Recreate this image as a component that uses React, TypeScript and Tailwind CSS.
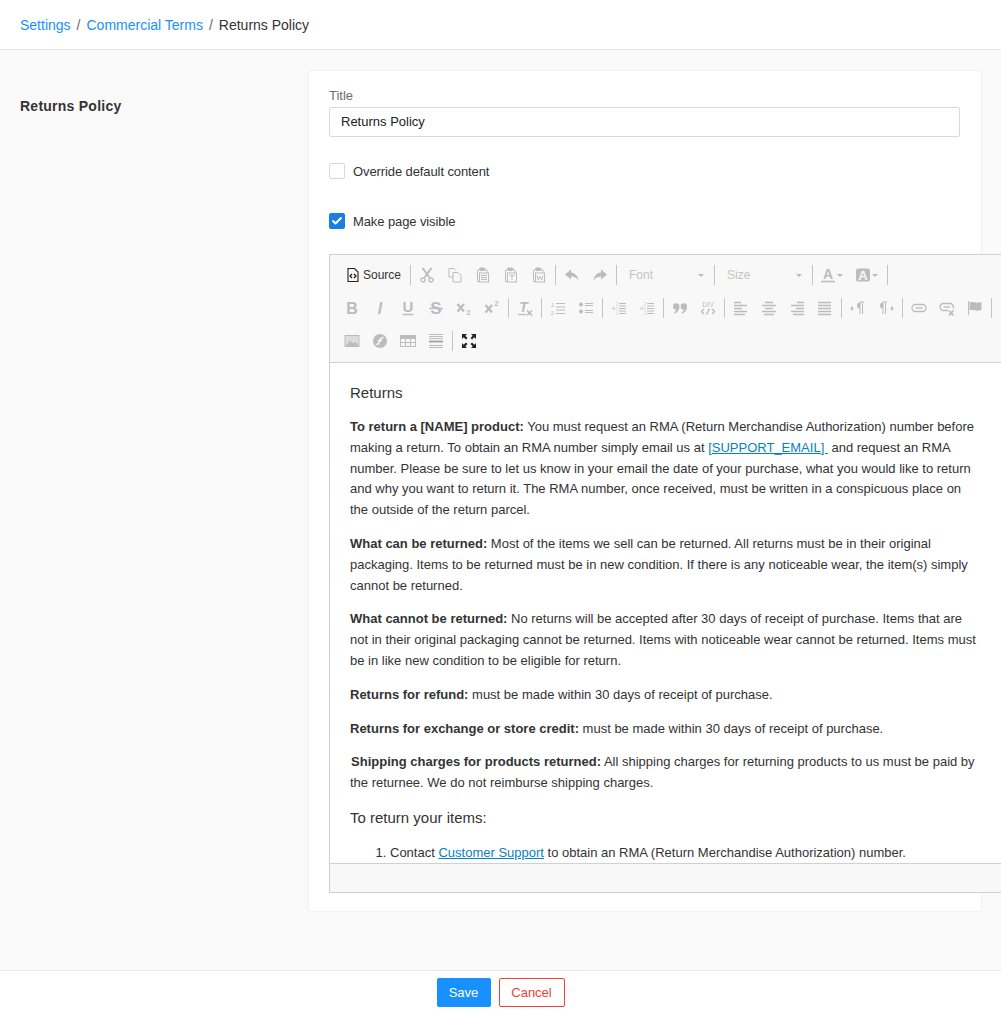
import React from 'react';
import { Check } from 'lucide-react';

const GRAY = '#bcbcbc';

// 16x16 drawn toolbar glyphs, same set as the editor's icon sprite
const Svg: React.FC<{ children: React.ReactNode }> = ({ children }) => (
  <svg width="16" height="16" viewBox="0 0 16 16" fill="none" stroke={GRAY} strokeWidth="1">
    {children}
  </svg>
);

const Letter: React.FC<{ ch: string; italic?: boolean; size?: number; x?: number; y?: number; weight?: string }> = ({
  ch,
  italic,
  size = 16,
  x = 8,
  y = 13.5,
  weight = 'bold',
}) => (
  <text
    x={x}
    y={y}
    textAnchor="middle"
    fontFamily="'Liberation Sans', sans-serif"
    fontWeight={weight}
    fontStyle={italic ? 'italic' : 'normal'}
    fontSize={size}
    fill={GRAY}
    stroke="none"
  >
    {ch}
  </text>
);

const lines = (ys: number[], x1: number, x2: number) => ys.map((y) => <path key={y} d={`M${x1} ${y}H${x2}`} />);

const PasteBase = ({ children }: { children?: React.ReactNode }) => (
  <>
    <path d="M4 3H2.5V14.5H4M10.5 3h1.5v3" />
    <rect x="4.5" y="1" width="5.5" height="2.5" rx="1" fill={GRAY} />
    <rect x="4.5" y="6" width="9" height="9" />
    {children}
  </>
);

const icons: Record<string, React.ReactNode> = {
  cut: (
    <>
      <path d="M3.5 1 10.5 10.5M12.5 1 5.5 10.5" strokeWidth="2" />
      <circle cx="4" cy="13" r="2" strokeWidth="1.3" />
      <circle cx="12" cy="13" r="2" strokeWidth="1.3" />
    </>
  ),
  copy: (
    <>
      <path d="M2 1.5H7L9 3.5M2 1.5V10H6" />
      <path d="M6 5.5H11L14 8.5V15H6Z" fill="#f8f8f8" />
    </>
  ),
  paste: <PasteBase>{lines([8.5, 10.5, 12.5], 6, 12)}</PasteBase>,
  pasteText: (
    <PasteBase>
      <path d="M6.5 8.5H11.5M9 8.5V13" />
    </PasteBase>
  ),
  pasteWord: (
    <PasteBase>
      <path d="M6 8.5 7.3 13 9 9.5 10.7 13 12 8.5" strokeWidth="1" />
    </PasteBase>
  ),
  undo: <path d="M7 2.5 1 7.5 7 12.5V9.5C10 9.5 12.5 10.5 14.5 13.5 14 9 11 6 7 5.5Z" fill={GRAY} stroke="none" />,
  redo: <path d="M9 2.5 15 7.5 9 12.5V9.5C6 9.5 3.5 10.5 1.5 13.5 2 9 5 6 9 5.5Z" fill={GRAY} stroke="none" />,
  bold: <Letter ch="B" />,
  italic: <Letter ch="I" italic />,
  underline: (
    <>
      <Letter ch="U" size={15} y={12} />
      <path d="M2.5 14.5H13.5" strokeWidth="1.5" />
    </>
  ),
  strike: (
    <>
      <Letter ch="S" size={17} y={14} />
      <path d="M1 8.5H15" strokeWidth="1.3" />
    </>
  ),
  sub: (
    <>
      <path d="M1.5 4 8 11.5M8 4 1.5 11.5" strokeWidth="2.2" />
      <Letter ch="2" size={7} x={12.5} y={14.5} />
    </>
  ),
  sup: (
    <>
      <path d="M1.5 5 8 12.5M8 5 1.5 12.5" strokeWidth="2.2" />
      <Letter ch="2" size={7} x={12.5} y={6} />
    </>
  ),
  removeFormat: (
    <>
      <Letter ch="T" italic size={14} x={6.5} y={11.5} />
      <path d="M1 14.5H9" strokeWidth="1.3" />
      <path d="M10 10.5 15 15.5M15 10.5 10 15.5" strokeWidth="1.6" />
    </>
  ),
  ol: (
    <>
      <Letter ch="1" size={6} x={2.5} y={6.5} weight="normal" />
      <Letter ch="2" size={6} x={2.5} y={14.5} weight="normal" />
      {lines([3.5, 7, 10, 13.5], 6, 15)}
    </>
  ),
  ul: (
    <>
      <circle cx="3" cy="4.5" r="2" fill={GRAY} stroke="none" />
      <circle cx="3" cy="11.5" r="2" fill={GRAY} stroke="none" />
      {lines([3.5, 5.5, 10.5, 12.5], 7, 15)}
    </>
  ),
  outdent: (
    <>
      {lines([3.5, 6, 8.5, 11, 13.5], 8, 15)}
      <path d="M1 8.5H5M2.5 6.5V10.5M6 2V15" strokeDasharray="1 1.4" />
    </>
  ),
  indent: (
    <>
      {lines([3.5, 6, 8.5, 11, 13.5], 8, 15)}
      <path d="M1 8.5H5M3 6.5V10.5M6 2V15" strokeDasharray="1 1.4" />
    </>
  ),
  quote: (
    <g fill={GRAY} stroke="none">
      <circle cx="4.2" cy="6.5" r="3.2" />
      <path d="M7.4 6.5C7.4 10 5.5 12.5 2.5 13.5L2 12.3C3.8 11.2 4.6 10 4.6 8.5Z" />
      <circle cx="11.8" cy="6.5" r="3.2" />
      <path d="M15 6.5C15 10 13.1 12.5 10.1 13.5L9.6 12.3C11.4 11.2 12.2 10 12.2 8.5Z" />
    </g>
  ),
  div: (
    <>
      <Letter ch="DIV" size={7} y={6.5} weight="normal" />
      <path d="M4 9 1.5 11.5 4 14M12 9 14.5 11.5 12 14M9.5 8.5 6.5 14.5" strokeWidth="1.4" />
    </>
  ),
  alignLeft: (
    <g strokeWidth="1.5">
      <path d="M1 2.5H8M1 5.5H14M1 8.5H9M1 11.5H14M1 14.5H12" />
    </g>
  ),
  alignCenter: (
    <g strokeWidth="1.5">
      <path d="M4 2.5H12M1 5.5H15M4 8.5H12M1 11.5H15M3 14.5H13" />
    </g>
  ),
  alignRight: (
    <g strokeWidth="1.5">
      <path d="M8 2.5H15M2 5.5H15M7 8.5H15M2 11.5H15M4 14.5H15" />
    </g>
  ),
  justify: (
    <g strokeWidth="1.5">
      <path d="M1 2.5H14M1 5.5H14M1 8.5H14M1 11.5H14M1 14.5H14" />
    </g>
  ),
  ltr: (
    <>
      <path d="M1 6V11L4 8.5Z" fill={GRAY} stroke="none" />
      <path d="M10 2H14M10 2V14M12.5 2V14" />
      <path d="M10 2.5a3 3 0 0 0 0 6Z" fill={GRAY} stroke="none" />
    </>
  ),
  rtl: (
    <>
      <path d="M15 6V11L12 8.5Z" fill={GRAY} stroke="none" />
      <path d="M5 2H9M5 2V14M7.5 2V14" />
      <path d="M5 2.5a3 3 0 0 0 0 6Z" fill={GRAY} stroke="none" />
    </>
  ),
  link: (
    <>
      <rect x="1" y="4.5" width="14" height="7" rx="3.5" strokeWidth="1.3" />
      <path d="M4.5 8H11.5" strokeWidth="1.3" />
    </>
  ),
  unlink: (
    <>
      <path d="M9 10.5H4.5A3.5 3.5 0 0 1 4.5 3.5H11.5A3.5 3.5 0 0 1 14 8.5" strokeWidth="1.3" />
      <path d="M4.5 7H11" strokeWidth="1.3" />
      <path d="M10 10.5 14.5 15.5M14.5 10.5 10 15.5" strokeWidth="1.7" />
    </>
  ),
  anchor: (
    <>
      <path d="M1.5 1V15" />
      <path d="M2.5 2.5C6 1 9 4 14.5 2V10C9 12 6 9 2.5 10.5Z" fill={GRAY} stroke="none" />
    </>
  ),
  image: (
    <>
      <rect x="1" y="2.5" width="14" height="11" fill="#dcdcdc" stroke={GRAY} strokeWidth="1" />
      <path d="M1.5 13 6 7.5 9 10.5 11 9 14.5 12V13Z" fill={GRAY} stroke="none" />
    </>
  ),
  flash: (
    <>
      <circle cx="8" cy="8" r="7" fill={GRAY} stroke="none" />
      <path d="M11.5 4.5C8.5 4.5 8 6.5 7.5 8.5S6.5 11.5 4.5 11.5M6 7.5H10" stroke="#f8f8f8" strokeWidth="1.5" />
    </>
  ),
  table: (
    <>
      <rect x="0.5" y="2.5" width="15" height="11" strokeWidth="1" />
      <path d="M0.5 2.5H15.5V6H0.5Z" fill={GRAY} stroke="none" />
      <path d="M0.5 9.5H15.5M5.5 6V13.5M10.5 6V13.5" strokeWidth="1" />
    </>
  ),
  hr: (
    <>
      <path d="M1 1.5H15M1 3.5H15M1 5.5H15M1 12.5H15M1 14.5H15" strokeWidth="1" />
      <path d="M1 8.5H15" strokeWidth="2" stroke="#a8a8a8" />
    </>
  ),
  maximize: (
    <path
      d="M1 1H6L4.3 2.7 6.5 5 5 6.5 2.7 4.3 1 6ZM15 1V6L13.3 4.3 11 6.5 9.5 5 11.7 2.7 10 1ZM1 15V10L2.7 11.7 5 9.5 6.5 11 4.3 13.3 6 15ZM15 15H10L11.7 13.3 9.5 11 11 9.5 13.3 11.7 15 10Z"
      fill="#222"
      stroke="none"
    />
  ),
};

const Btn: React.FC<{ name: string }> = ({ name }) => (
  <span className="flex h-7 w-7 items-center justify-center">
    <Svg>{icons[name]}</Svg>
  </span>
);

const Sep = () => <span className="mx-[2px] my-[4px] h-5 w-px bg-[#c4c4c4]" />;

const Combo: React.FC<{ label: string }> = ({ label }) => (
  <span className="flex h-7 w-[93px] items-center justify-between pl-[10px] pr-[8px] text-xs text-[#c4c4c4]">
    {label}
    <span className="h-0 w-0 border-x-[3px] border-t-[3px] border-x-transparent border-t-[#bbbbbb]" />
  </span>
);

const ColorBtn: React.FC<{ bg?: boolean }> = ({ bg }) => (
  <span className="flex h-7 w-[35px] items-center gap-[1px] pl-[5px]">
    <Svg>
      {bg ? (
        <>
          <rect x="1" y="1.5" width="14" height="13" rx="2" fill={GRAY} stroke="none" />
          <text
            x="8"
            y="13"
            textAnchor="middle"
            fontFamily="'Liberation Sans', sans-serif"
            fontWeight="bold"
            fontSize="13"
            fill="#f8f8f8"
            stroke="none"
          >
            A
          </text>
        </>
      ) : (
        <>
          <Letter ch="A" size={14} y={12} />
          <path d="M1 14.5H15" strokeWidth="1.6" />
        </>
      )}
    </Svg>
    <span className="h-0 w-0 border-x-[3px] border-t-[3px] border-x-transparent border-t-[#bbbbbb]" />
  </span>
);

const Toolbar = () => (
  <div className="flex h-[108px] flex-col gap-[5px] border-b border-[#d1d1d1] bg-[#f8f8f8] pl-2 pt-[6px]">
    <div className="flex h-7 items-center">
      <span className="flex h-7 w-[70px] items-center gap-[2px] pl-[7px] text-xs text-[#333333]">
        <svg width="16" height="16" viewBox="0 0 16 16" fill="none" stroke="#222" strokeWidth="1.1">
          <path d="M3 1.5H9.5L13 5V14.5H3Z" />
          <path d="M7 7 5 9 7 11M9 7 11 9 9 11" strokeWidth="1.3" />
        </svg>
        Source
      </span>
      <Sep />
      {['cut', 'copy', 'paste', 'pasteText', 'pasteWord'].map((n) => (
        <Btn key={n} name={n} />
      ))}
      <Sep />
      <Btn name="undo" />
      <Btn name="redo" />
      <Sep />
      <Combo label="Font" />
      <Sep />
      <Combo label="Size" />
      <Sep />
      <ColorBtn />
      <ColorBtn bg />
      <Sep />
    </div>
    <div className="flex h-7 items-center">
      {['bold', 'italic', 'underline', 'strike', 'sub', 'sup'].map((n) => (
        <Btn key={n} name={n} />
      ))}
      <Sep />
      <Btn name="removeFormat" />
      <Sep />
      <Btn name="ol" />
      <Btn name="ul" />
      <Sep />
      <Btn name="outdent" />
      <Btn name="indent" />
      <Sep />
      <Btn name="quote" />
      <Btn name="div" />
      <Sep />
      {['alignLeft', 'alignCenter', 'alignRight', 'justify'].map((n) => (
        <Btn key={n} name={n} />
      ))}
      <Sep />
      <Btn name="ltr" />
      <Btn name="rtl" />
      <Sep />
      <Btn name="link" />
      <Btn name="unlink" />
      <Btn name="anchor" />
      <Sep />
    </div>
    <div className="flex h-7 items-center">
      {['image', 'flash', 'table', 'hr'].map((n) => (
        <Btn key={n} name={n} />
      ))}
      <Sep />
      <Btn name="maximize" />
    </div>
  </div>
);

const EditorBody = () => (
  <div className="h-[500px] overflow-hidden bg-white pl-5 pt-[18px] text-[13px] leading-[1.6] text-[#333333]">
    <div className="w-[630px]">
      <h3 className="mb-[12px] text-[15px]">Returns</h3>
      <p className="mb-[13px]">
        <strong>To return a [NAME] product:</strong> You must request an RMA (Return Merchandise Authorization) number
        before making a return. To obtain an RMA number simply email us at{' '}
        <a className="text-[#0782c1] underline">[SUPPORT_EMAIL]&nbsp;</a>&nbsp;and request an RMA number. Please be sure
        to let us know in your email the date of your purchase, what you would like to return and why you want to return
        it. The RMA number, once received, must be written in a conspicuous place on the outside of the return parcel.
      </p>
      <p className="mb-[13px]">
        <strong>What can be returned:</strong> Most of the items we sell can be returned. All returns must be in their
        original packaging. Items to be returned must be in new condition. If there is any noticeable wear, the item(s)
        simply cannot be returned.
      </p>
      <p className="mb-[13px]">
        <strong>What cannot be returned:</strong> No returns will be accepted after 30 days of receipt of purchase. Items
        that are not in their original packaging cannot be returned. Items with noticeable wear cannot be returned. Items
        must be in like new condition to be eligible for return.
      </p>
      <p className="mb-[13px]">
        <strong>Returns for refund:</strong> must be made within 30 days of receipt of purchase.
      </p>
      <p className="mb-[13px]">
        <strong>Returns for exchange or store credit:</strong> must be made within 30 days of receipt of purchase.
      </p>
      <p className="mb-[12px]">
        <strong>&#8202;Shipping charges for products returned:</strong> All shipping charges for returning products to us
        must be paid by the returnee. We do not reimburse shipping charges.
      </p>
      <h3 className="mb-[13px] text-[15px]">To return your items:</h3>
      <ol className="list-decimal pl-[40px]">
        <li>
          Contact <a className="text-[#0782c1] underline">Customer Support</a> to obtain an RMA (Return Merchandise
          Authorization) number.
        </li>
      </ol>
    </div>
  </div>
);

const Checkbox: React.FC<{ checked?: boolean; label: string }> = ({ checked, label }) => (
  <label className="flex h-5 items-center gap-2 text-[#333333]">
    {checked ? (
      <span className="flex h-4 w-4 items-center justify-center rounded-[2px] bg-[#1a7fe3]">
        <Check size={12} color="#fff" strokeWidth={4} />
      </span>
    ) : (
      <span className="h-4 w-4 rounded-[2px] border border-[#d9d9d9] bg-white" />
    )}
    <span className="pt-[2px] tracking-[-0.1px]">{label}</span>
  </label>
);

export default function App() {
  return (
    <div className="flex h-screen flex-col overflow-hidden bg-[#fafafa] font-['Liberation_Sans',Arial,sans-serif] text-[13px]">
      <nav className="flex h-[50px] shrink-0 items-center gap-[6px] border-b border-[#e8e8e8] bg-white pl-5 pt-[2px] text-[14px] text-[#666666]">
        <a className="text-[#1890ff]">Settings</a>
        <span>/</span>
        <a className="text-[#1890ff]">Commercial Terms</a>
        <span>/</span>
        <span className="text-[#333333]">Returns Policy</span>
      </nav>

      <main className="flex flex-1 pl-5 pr-5 pt-[21px]">
        <h2 className="w-[289px] shrink-0 pt-[25px] text-[14px] font-bold tracking-[0.25px] text-[#333333]">
          Returns Policy
        </h2>
        <section className="flex h-[840px] w-[672px] flex-col rounded-[2px] bg-white pl-5 pt-[16px] shadow-[0_0_2px_rgba(0,0,0,0.12)]">
          <label className="mb-[2px] leading-[18px] text-[#6b6b7b]">Title</label>
          <div className="mr-[21px] flex h-[30px] items-center rounded-[2px] border border-[#d9d9d9] pl-[11px] text-[#222222]">
            Returns Policy
          </div>
          <div className="mt-[24px]">
            <Checkbox label="Override default content" />
          </div>
          <div className="mt-[30px]">
            <Checkbox checked label="Make page visible" />
          </div>
          <div className="mt-[23px] w-[700px] border border-[#d1d1d1]">
            <Toolbar />
            <EditorBody />
            <div className="h-[29px] border-t border-[#d1d1d1] bg-[#f8f8f8]" />
          </div>
        </section>
      </main>

      <footer className="flex h-[51px] shrink-0 items-start justify-center gap-2 border-t border-[#e8e8e8] bg-white pt-[7px]">
        <button className="h-[29px] w-[54px] rounded-[2px] bg-[#1890ff] text-white">Save</button>
        <button className="h-[29px] w-[66px] rounded-[2px] border border-[#f04134] bg-white text-[#f04134]">
          Cancel
        </button>
      </footer>
    </div>
  );
}
